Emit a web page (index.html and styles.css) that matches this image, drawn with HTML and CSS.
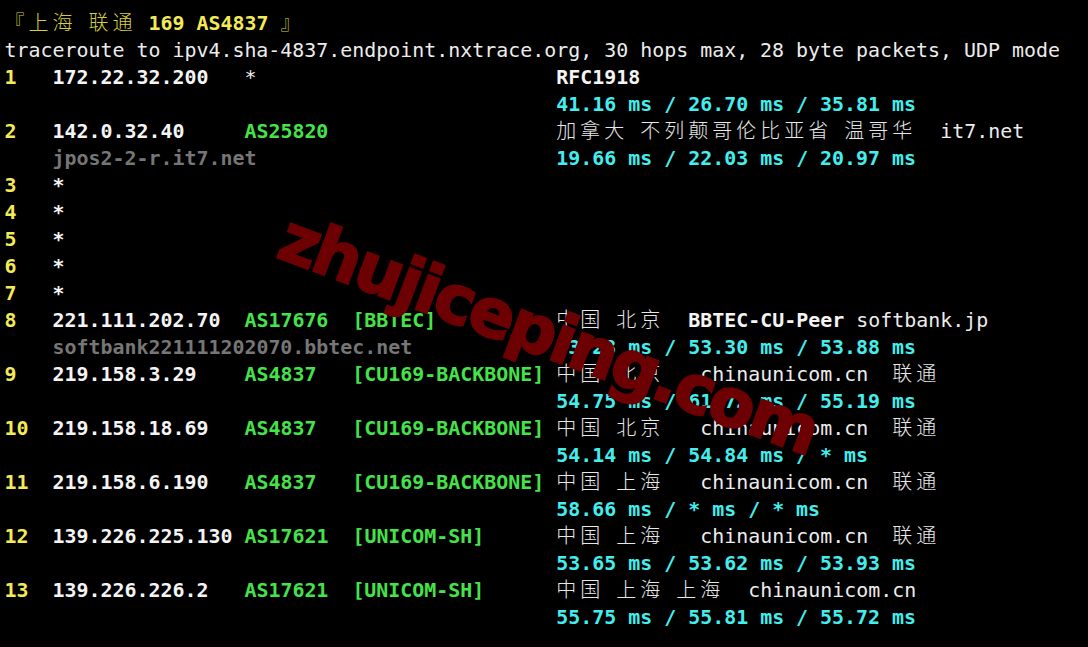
FILE: index.html
```html
<!DOCTYPE html>
<html lang="zh-CN">
<head>
<meta charset="utf-8">
<title>nexttrace</title>
<link rel="stylesheet" href="styles.css">
</head>
<body>
<div class="term">
<div class="l y"><span class="cj">『上海</span> <span class="cj">联通</span> 169 AS4837 <span class="cj">』</span></div>
<div class="l n">traceroute to ipv4.sha-4837.endpoint.nxtrace.org, 30 hops max, 28 byte packets, UDP mode</div>
<div class="l"><span class="y">1</span>   <span class="w">172.22.32.200</span>   <span class="n">*</span>                         <span class="w">RFC1918</span></div>
<div class="l">                                              <span class="c">41.16 ms / 26.70 ms / 35.81 ms</span></div>
<div class="l"><span class="y">2</span>   <span class="w">142.0.32.40</span>     <span class="g">AS25820</span>                   <span class="cj">加拿大</span> <span class="cj">不列颠哥伦比亚省</span> <span class="cj">温哥华</span>  <span class="n">it7.net</span></div>
<div class="l">    <span class="d">jpos2-2-r.it7.net</span>                         <span class="c">19.66 ms / 22.03 ms / 20.97 ms</span></div>
<div class="l"><span class="y">3</span>   <span class="w">*</span></div>
<div class="l"><span class="y">4</span>   <span class="w">*</span></div>
<div class="l"><span class="y">5</span>   <span class="w">*</span></div>
<div class="l"><span class="y">6</span>   <span class="w">*</span></div>
<div class="l"><span class="y">7</span>   <span class="w">*</span></div>
<div class="l"><span class="y">8</span>   <span class="w">221.111.202.70</span>  <span class="g">AS17676</span>  <span class="g">[BBTEC]</span>          <span class="cj">中国</span> <span class="cj">北京</span>  <span class="w">BBTEC-CU-Peer</span> <span class="n">softbank.jp</span></div>
<div class="l">    <span class="d">softbank221111202070.bbtec.net</span>            <span class="c">53.28 ms / 53.30 ms / 53.88 ms</span></div>
<div class="l"><span class="y">9</span>   <span class="w">219.158.3.29</span>    <span class="g">AS4837</span>   <span class="g">[CU169-BACKBONE]</span> <span class="cj">中国</span> <span class="cj">北京</span>   <span class="n">chinaunicom.cn</span>  <span class="cj">联通</span></div>
<div class="l">                                              <span class="c">54.75 ms / 61.72 ms / 55.19 ms</span></div>
<div class="l"><span class="y">10</span>  <span class="w">219.158.18.69</span>   <span class="g">AS4837</span>   <span class="g">[CU169-BACKBONE]</span> <span class="cj">中国</span> <span class="cj">北京</span>   <span class="n">chinaunicom.cn</span>  <span class="cj">联通</span></div>
<div class="l">                                              <span class="c">54.14 ms / 54.84 ms / * ms</span></div>
<div class="l"><span class="y">11</span>  <span class="w">219.158.6.190</span>   <span class="g">AS4837</span>   <span class="g">[CU169-BACKBONE]</span> <span class="cj">中国</span> <span class="cj">上海</span>   <span class="n">chinaunicom.cn</span>  <span class="cj">联通</span></div>
<div class="l">                                              <span class="c">58.66 ms / * ms / * ms</span></div>
<div class="l"><span class="y">12</span>  <span class="w">139.226.225.130</span> <span class="g">AS17621</span>  <span class="g">[UNICOM-SH]</span>      <span class="cj">中国</span> <span class="cj">上海</span>   <span class="n">chinaunicom.cn</span>  <span class="cj">联通</span></div>
<div class="l">                                              <span class="c">53.65 ms / 53.62 ms / 53.93 ms</span></div>
<div class="l"><span class="y">13</span>  <span class="w">139.226.226.2</span>   <span class="g">AS17621</span>  <span class="g">[UNICOM-SH]</span>      <span class="cj">中国</span> <span class="cj">上海</span> <span class="cj">上海</span>  <span class="n">chinaunicom.cn</span></div>
<div class="l">                                              <span class="c">55.75 ms / 55.81 ms / 55.72 ms</span></div>
</div>
<div class="mark">zhujiceping.com</div>
</body>
</html>
```
FILE: styles.css
```css
html, body {
  margin: 0;
  padding: 0;
  background: #000;
  width: 1088px;
  height: 647px;
  overflow: hidden;
}
body {
  position: relative;
  color: #f0f0f0;
  font-family: "DejaVu Sans Mono", "Liberation Mono", monospace;
  font-size: 19.93px;
}
.term {
  padding: 10px 0 0 4.5px;
}
.l {
  height: 27px;
  line-height: 27px;
  white-space: pre;
  font-weight: bold;
}
.y { color: #f3ea56; font-weight: bold; }
.w { color: #f4f4f4; font-weight: bold; }
.n { color: #ececec; font-weight: normal; }
.g { color: #45e24c; font-weight: bold; }
.c { color: #42eeee; font-weight: bold; }
.d { color: #767676; font-weight: bold; }
.cj {
  font-family: "Noto Sans CJK SC", sans-serif;
  font-weight: 300;
  font-size: 20px;
  line-height: 20px;
  letter-spacing: 4px;
  color: #e8e8e8;
}
.y .cj { color: #d6cf3a; }
.mark {
  position: absolute;
  left: 294px;
  top: 204px;
  font-family: "DejaVu Sans", "Liberation Sans", sans-serif;
  font-weight: bold;
  font-size: 67px;
  line-height: 67px;
  letter-spacing: -3px;
  color: rgb(108, 0, 2);
  -webkit-text-stroke: 2px rgb(108, 0, 2);
  transform: rotate(20.5deg);
  transform-origin: 0 0;
  white-space: nowrap;
  pointer-events: none;
}
```
